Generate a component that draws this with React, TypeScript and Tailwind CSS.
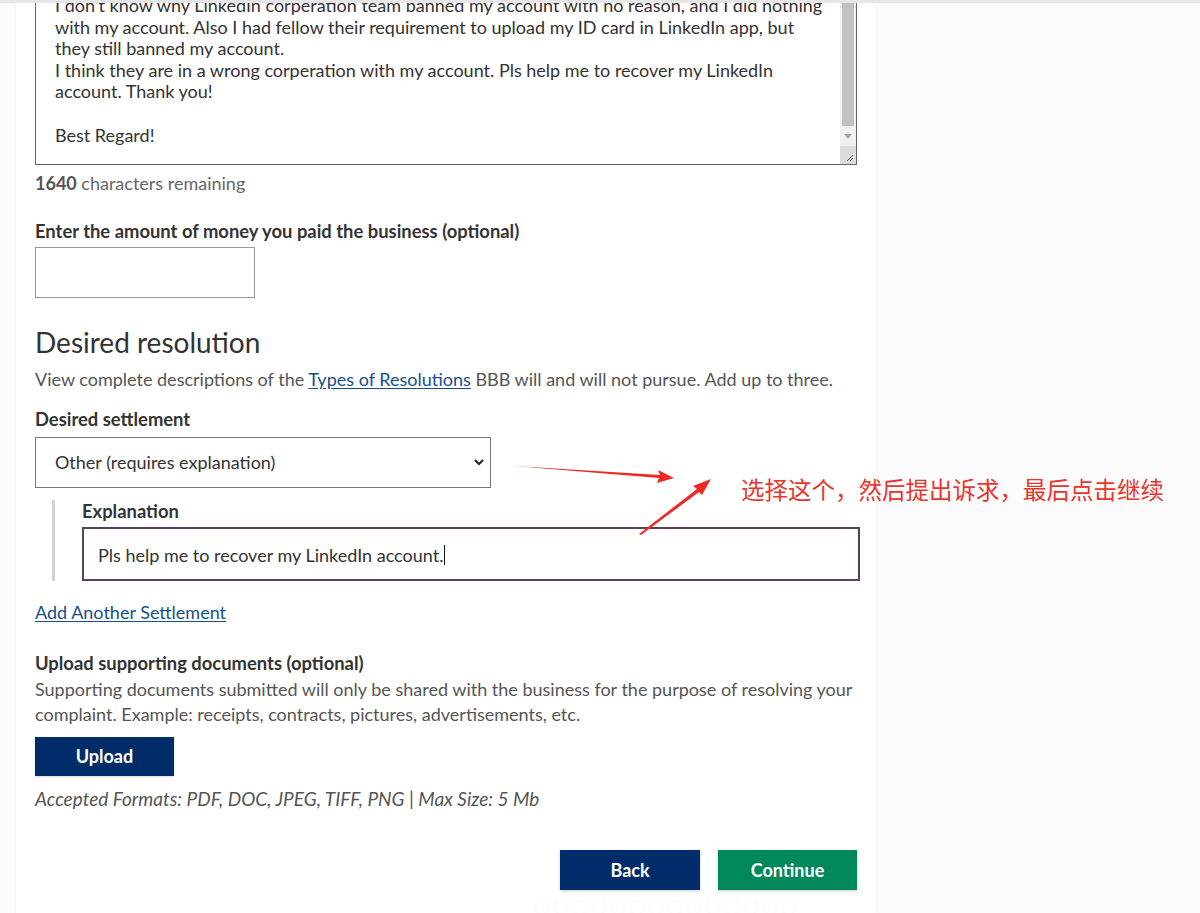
import React from 'react'

const font = { fontFamily: 'Lato, "Open Sans", sans-serif' }

function Scrollbar() {
  return (
    <div className="flex w-[16px] flex-col bg-[#f1f1f1]">
      <div className="mx-[2px] flex-1 bg-[#c1c1c1]" />
      <div className="flex h-[20px] items-center justify-center">
        <svg width="8" height="5" viewBox="0 0 8 5">
          <path d="M0 0 L8 0 L4 5 Z" fill="#a3a3a3" />
        </svg>
      </div>
      <div className="flex h-[18px] items-end justify-end bg-[#dcdcdc] p-[2px]">
        <svg width="9" height="9" viewBox="0 0 9 9">
          <path d="M8 2 L2 8 M8 5 L5 8" stroke="#555" strokeWidth="1" />
        </svg>
      </div>
    </div>
  )
}

function Annotation() {
  return (
    <div className="pointer-events-none absolute inset-0">
      <svg className="absolute left-0 top-0" width="1200" height="913">
        <path d="M514 463 L660 472 L658 467 L674 475 L657 480 L659 475 Z" fill="#ee2a24" />
        <path d="M639 531 L697 486 L693 483 L711 476 L702 492 L699 489 L641 532 Z" fill="#ee2a24" />
      </svg>
      <div
        className="absolute left-[741px] top-[471px] text-[23.5px] leading-[30px] text-[#e8352e]"
        style={{ fontFamily: '"Noto Sans CJK SC", sans-serif' }}
      >
        选择这个，然后提出诉求，最后点击继续
      </div>
    </div>
  )
}

export default function App() {
  return (
    <div className="relative h-[913px] overflow-hidden border-t-[3px] border-[#e6e6e6] bg-[#fbfbfb]" style={font}>
      <div className="ml-[16px] h-full w-[860px] bg-white pl-[19px] pr-[19px] shadow-[0_0_2px_rgba(0,0,0,0.06)]">
        {/* textarea, scrolled so that the top is cut off */}
        <div className="flex h-[162px] overflow-hidden border-x border-b border-[#666]">
          <div className="flex-1 overflow-hidden">
            <div className="-mt-[8px] pl-[19px] pr-[8px] text-[18px] leading-[21.6px] text-[#333]">
              <p>I don't know why LinkedIn corperation team banned my account with no reason, and I did nothing</p>
              <p>with my account. Also I had fellow their requirement to upload my ID card in LinkedIn app, but</p>
              <p>they still banned my account.</p>
              <p>I think they are in a wrong corperation with my account. Pls help me to recover my LinkedIn</p>
              <p>account. Thank you!</p>
              <p>&nbsp;</p>
              <p>Best Regard!</p>
            </div>
          </div>
          <Scrollbar />
        </div>

        <p className="mt-[7px] text-[18px] leading-[22px] text-[#666]">
          <span className="font-bold text-[#555]">1640</span> characters remaining
        </p>

        <label className="mt-[26px] block text-[18.4px] font-bold leading-[22px] text-[#333]">
          Enter the amount of money you paid the business (optional)
        </label>
        <div className="mt-[5px] h-[51px] w-[220px] border border-[#999]" />

        <h2 className="mt-[28px] text-[28px] leading-[32px] text-[#333]">Desired resolution</h2>
        <p className="mt-[10px] text-[18px] leading-[22px] text-[#555]">
          View complete descriptions of the{' '}
          <a className="text-[#16508a] underline underline-offset-2">Types of Resolutions</a> BBB will and will not
          pursue. Add up to three.
        </p>

        <label className="mt-[18px] block text-[18.4px] font-bold leading-[22px] text-[#333]">Desired settlement</label>
        <div className="mt-[7px] flex h-[51px] w-[456px] items-center justify-between border border-[#777] pl-[19px] pr-[6px]">
          <span className="text-[18px] text-[#333]">Other (requires explanation)</span>
          <svg width="10" height="7" viewBox="0 0 10 7">
            <path d="M1 1 L5 5 L9 1" stroke="#222" strokeWidth="2" fill="none" />
          </svg>
        </div>

        <div className="ml-[17px] mt-[15px] border-l-[3px] border-[#d2d2d2] pl-[27px]">
          <label className="-mt-[3px] block text-[18.4px] font-bold leading-[22px] text-[#333]">Explanation</label>
          <div className="mt-[5px] flex h-[54px] w-[778px] items-center border-2 border-[#5b3f5e] pl-[14px] pt-[2px]">
            <span className="text-[18px] text-[#333]">Pls help me to recover my LinkedIn account.</span>
            <span className="ml-[1px] h-[20px] w-[1px] bg-[#111]" />
          </div>
        </div>

        <a className="mt-[20px] block text-[18px] leading-[22px] text-[#16508a] underline underline-offset-2">
          Add Another Settlement
        </a>

        <label className="mt-[29px] block text-[18.4px] font-bold leading-[22px] text-[#333]">
          Upload supporting documents (optional)
        </label>
        <p className="mt-[3px] text-[18px] leading-[25px] text-[#555]">
          Supporting documents submitted will only be shared with the business for the purpose of resolving your
          complaint. Example: receipts, contracts, pictures, advertisements, etc.
        </p>
        <button className="mt-[10px] h-[39px] w-[139px] bg-[#002d6a] text-[18px] font-bold text-white shadow-[0_1px_2px_rgba(0,0,0,0.15)]">
          Upload
        </button>
        <p className="mt-[12px] text-[19px] italic leading-[22px] text-[#555]">
          Accepted Formats: PDF, DOC, JPEG, TIFF, PNG | Max Size: 5 Mb
        </p>

        <div className="mt-[40px] flex justify-end gap-[18px]">
          <button className="h-[40px] w-[140px] bg-[#002d6a] text-[18px] font-bold text-white shadow-[0_1px_3px_rgba(0,0,0,0.2)]">
            Back
          </button>
          <button className="h-[40px] w-[139px] bg-[#00875a] text-[18px] font-bold text-white shadow-[0_1px_3px_rgba(0,0,0,0.2)]">
            Continue
          </button>
        </div>

        <div className="mt-[11px] flex justify-end gap-[7px] pr-[62px]">
          {Array.from({ length: 14 }).map((_, i) => (
            <span key={i} className="h-[12px] w-[12px] rounded-full bg-white shadow-[0_0_4px_rgba(0,0,0,0.05)]" />
          ))}
        </div>
      </div>
      <Annotation />
    </div>
  )
}
